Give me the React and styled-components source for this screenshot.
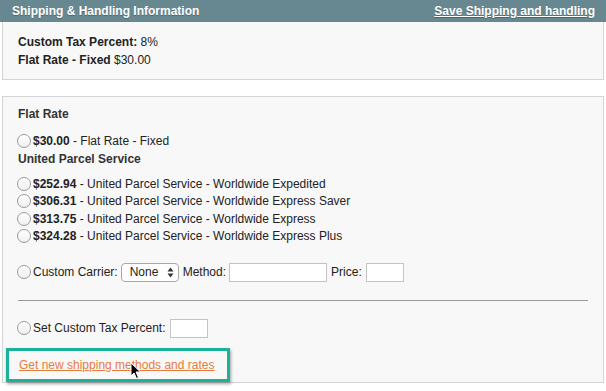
import React from "react";
import styled, { createGlobalStyle } from "styled-components";

const Global = createGlobalStyle`
  html, body { margin: 0; padding: 0; background: #ffffff; }
  body { font-family: "Liberation Sans", Arial, Helvetica, sans-serif; font-size: 12px; color: #222; }
`;

const Page = styled.div`
  width: 606px;
  height: 391px;
  overflow: hidden;
  background: #fff;
`;

const Header = styled.div`
  height: 22px;
  background: #678890;
  display: flex;
  align-items: center;
  justify-content: space-between;
  padding: 0 11px 0 12px;
  color: #fff;
  font-weight: bold;
  font-size: 12px;
  text-shadow: 0 1px 0 rgba(0, 0, 0, 0.25);
`;

const HeaderLink = styled.a`
  color: #fff;
  text-decoration: underline;
  cursor: pointer;
`;

const Panel = styled.div`
  margin: ${(p) => (p.$top ? "16px 2px 0" : "0 2px")};
  border: 1px solid #d4d4d4;
  border-top: ${(p) => (p.$top ? "1px solid #d4d4d4" : "none")};
  background: #f8f8f8;
  padding: ${(p) => p.$pad};
`;

const Line = styled.div`
  line-height: 18px;
  color: #222;
`;

const Heading = styled.div`
  font-weight: bold;
  line-height: 18px;
  color: #333;
  margin-bottom: ${(p) => p.$mb || 0}px;
`;

const Row = styled.label`
  display: flex;
  align-items: center;
  height: ${(p) => p.$h || 17.5}px;
  margin-top: ${(p) => p.$mt || 0}px;
  color: #222;
  white-space: nowrap;
`;

const Radio = styled.input.attrs({ type: "radio" })`
  appearance: none;
  -webkit-appearance: none;
  width: 14px;
  height: 14px;
  margin: 0 2px 0 -1px;
  border-radius: 50%;
  border: 1px solid #9a9a9a;
  background: linear-gradient(#ffffff, #f0f0f0);
  box-sizing: border-box;
  flex: none;
`;

const Gap = styled.span`
  display: inline-block;
  width: ${(p) => p.$w}px;
`;

const SelectWrap = styled.span`
  position: relative;
  display: inline-flex;
  margin: 0 4px 0 3px;
`;

const Select = styled.select`
  appearance: none;
  -webkit-appearance: none;
  width: 58px;
  height: 19px;
  border: 1px solid #a8a8a8;
  border-radius: 4px;
  background: #fff;
  font-family: "Liberation Sans", Arial, sans-serif;
  font-size: 12px;
  color: #222;
  padding: 0 0 0 8px;
  box-sizing: border-box;
`;

const Arrows = styled.svg`
  position: absolute;
  right: 5px;
  top: 4px;
  pointer-events: none;
`;

const Field = styled.input.attrs({ type: "text" })`
  width: ${(p) => p.$w}px;
  height: 19px;
  box-sizing: border-box;
  border: 1px solid #c4c4c4;
  background: #fff;
  margin: 0 0 0 ${(p) => p.$ml ?? 4}px;
  padding: 0;
`;

const Rule = styled.hr`
  border: none;
  border-top: 1px solid #9a9a9a;
  margin: 18px 0 17px;
  height: 0;
`;

const LinkArea = styled.div`
  position: relative;
  margin-top: 10px;
  height: 34px;
  display: flex;
  align-items: center;
  &::before {
    content: "";
    position: absolute;
    left: -12px;
    top: 0;
    width: 224px;
    height: 34px;
    border: 3px solid #18b399;
    box-sizing: border-box;
    box-shadow: 1px 2px 3px rgba(0, 0, 0, 0.35);
  }
`;

const OrangeLink = styled.a`
  position: relative;
  color: #e77c3c;
  text-decoration: underline;
  cursor: pointer;
  line-height: 18px;
  margin-left: 1px;
`;

const Cursor = styled.svg`
  position: absolute;
  left: 112px;
  top: 14px;
`;

export default function App() {
  const ups = [
    ["$252.94", "United Parcel Service - Worldwide Expedited"],
    ["$306.31", "United Parcel Service - Worldwide Express Saver"],
    ["$313.75", "United Parcel Service - Worldwide Express"],
    ["$324.28", "United Parcel Service - Worldwide Express Plus"],
  ];
  return (
    <Page>
      <Global />
      <Header>
        <span>Shipping &amp; Handling Information</span>
        <HeaderLink>Save Shipping and handling</HeaderLink>
      </Header>
      <Panel $pad="11px 15px 10px">
        <Line>
          <b>Custom Tax Percent:</b> 8%
        </Line>
        <Line>
          <b>Flat Rate - Fixed</b> $30.00
        </Line>
      </Panel>
      <Panel $top $pad="8px 15px 0">
        <Heading $mb={9}>Flat Rate</Heading>
        <Row $h={18}>
          <Radio name="rate" />
          <b>$30.00</b>&nbsp;- Flat Rate - Fixed
        </Row>
        <Heading $mb={7}>United Parcel Service</Heading>
        {ups.map(([price, label]) => (
          <Row key={price}>
            <Radio name="rate" />
            <b>{price}</b>&nbsp;- {label}
          </Row>
        ))}
        <Row $h={20} $mt={17}>
          <Radio name="rate" />
          Custom Carrier:
          <SelectWrap>
            <Select defaultValue="None">
              <option>None</option>
            </Select>
            <Arrows width="7" height="11" viewBox="0 0 7 11">
              <path d="M3.5 0.5 L6.5 4.5 H0.5 Z" fill="#333" />
              <path d="M3.5 10.5 L6.5 6.5 H0.5 Z" fill="#333" />
            </Arrows>
          </SelectWrap>
          Method:
          <Field $w={98} $ml={3} />
          <Gap $w={4} />
          Price:
          <Field $w={38} />
        </Row>
        <Rule />
        <Row $h={20}>
          <Radio name="tax" />
          Set Custom Tax Percent:
          <Field $w={38} />
        </Row>
        <LinkArea>
          <OrangeLink>Get new shipping methods and rates</OrangeLink>
          <Cursor width="12" height="18" viewBox="0 0 12 18">
            <path
              d="M1 1 L1 14 L4 11 L6.5 16.5 L8.5 15.5 L6 10 L10.5 10 Z"
              fill="#000"
              stroke="#fff"
              strokeWidth="1"
              strokeLinejoin="round"
            />
          </Cursor>
        </LinkArea>
      </Panel>
    </Page>
  );
}
